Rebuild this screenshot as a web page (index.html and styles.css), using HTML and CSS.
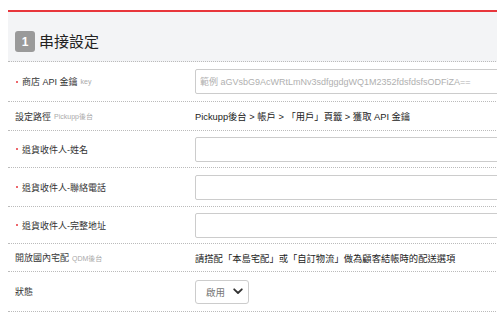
FILE: index.html
```html
<!DOCTYPE html>
<html lang="zh-Hant">
<head>
<meta charset="utf-8">
<link rel="stylesheet" href="styles.css">
</head>
<body>
<div class="panel">
  <div class="panel-head">
    <span class="badge">1</span>
    <h2 class="title">串接設定</h2>
  </div>
  <div class="row row-api">
    <div class="label req">商店 API 金鑰 <small>key</small></div>
    <div class="value"><input class="field" type="text" placeholder="範例 aGVsbG9AcWRtLmNv3sdfggdgWQ1M2352fdsfdsfsODFiZA=="></div>
  </div>
  <div class="row row-text">
    <div class="label">設定路徑 <small>Pickupp後台</small></div>
    <div class="value text">Pickupp後台 &gt; 帳戶 &gt; 「用戶」頁籤 &gt; 獲取 API 金鑰</div>
  </div>
  <div class="row row-in">
    <div class="label req">退貨收件人-姓名</div>
    <div class="value"><input class="field" type="text"></div>
  </div>
  <div class="row row-in2">
    <div class="label req">退貨收件人-聯絡電話</div>
    <div class="value"><input class="field" type="text"></div>
  </div>
  <div class="row row-in">
    <div class="label req">退貨收件人-完整地址</div>
    <div class="value"><input class="field" type="text"></div>
  </div>
  <div class="row row-text2">
    <div class="label">開放國內宅配 <small>QDM後台</small></div>
    <div class="value text">請搭配「本島宅配」或「自訂物流」做為顧客結帳時的配送選項</div>
  </div>
  <div class="row row-api">
    <div class="label">狀態</div>
    <div class="value">
      <div class="select"><span>啟用</span><svg width="10" height="7" viewBox="0 0 10 7"><path d="M1.2 1.3 L5 5 L8.8 1.3" fill="none" stroke="#333" stroke-width="1.8" stroke-linecap="round" stroke-linejoin="round"/></svg></div>
    </div>
  </div>
</div>
</body>
</html>
```
FILE: styles.css
```css
html, body {
  margin: 0;
  padding: 0;
  background: #fff;
  overflow: hidden;
}
body {
  padding: 10px 0 0 8px;
  font-family: "Liberation Sans", "Noto Sans CJK TC", sans-serif;
  color: #333;
}
.panel {
  width: 560px;
  border-top: 2px solid #e8363c;
}
.panel-head {
  height: 50px;
  box-sizing: border-box;
  padding: 19px 7px 0;
  background: #f3f4f6;
  border-bottom: 1px dotted #bbb;
  display: flex;
  align-items: flex-start;
  gap: 4px;
}
.badge {
  width: 20px;
  height: 21px;
  background: #9a9a9a;
  border-radius: 3px;
  color: #fff;
  font-size: 12px;
  font-weight: bold;
  display: flex;
  align-items: center;
  justify-content: center;
}
.title {
  margin: 0;
  font-size: 15px;
  line-height: 21px;
  font-weight: normal;
  color: #222;
}
.row {
  display: flex;
  align-items: center;
  padding-left: 7px;
  border-bottom: 1px dotted #bbb;
  box-sizing: border-box;
}
.row-api { height: 40px; }
.row-text { height: 29px; }
.row-in { height: 37px; }
.row-in2 { height: 39px; }
.row-text2 { height: 28px; }
.label {
  width: 180px;
  flex: none;
  font-size: 9px;
  color: #333;
  display: flex;
  align-items: center;
  white-space: nowrap;
}
.label small {
  font-size: 7px;
  color: #aaa;
  margin-left: 3px;
}
.label.req::before {
  content: "";
  width: 2px;
  height: 2px;
  border-radius: 50%;
  background: #e8363c;
  margin: 0 4px 0 1px;
}
.value {
  flex: 1;
  display: flex;
  align-items: center;
}
.value.text {
  font-size: 9.3px;
  color: #222;
  white-space: nowrap;
}
.field {
  width: 340px;
  height: 25px;
  box-sizing: border-box;
  margin: 0;
  border: 1px solid #ccc;
  border-radius: 2px;
  padding: 0 4px;
  font-family: "Liberation Sans", "Noto Sans CJK TC", sans-serif;
  font-size: 9px;
  color: #333;
  background: #fff;
}
.field::placeholder {
  color: #b0b0b0;
}
.select {
  width: 54px;
  height: 24px;
  box-sizing: border-box;
  border: 1px solid #ccc;
  border-radius: 3px;
  display: flex;
  align-items: center;
  justify-content: space-between;
  padding: 0 5px 0 10px;
  font-size: 9.5px;
  color: #777;
}
```
